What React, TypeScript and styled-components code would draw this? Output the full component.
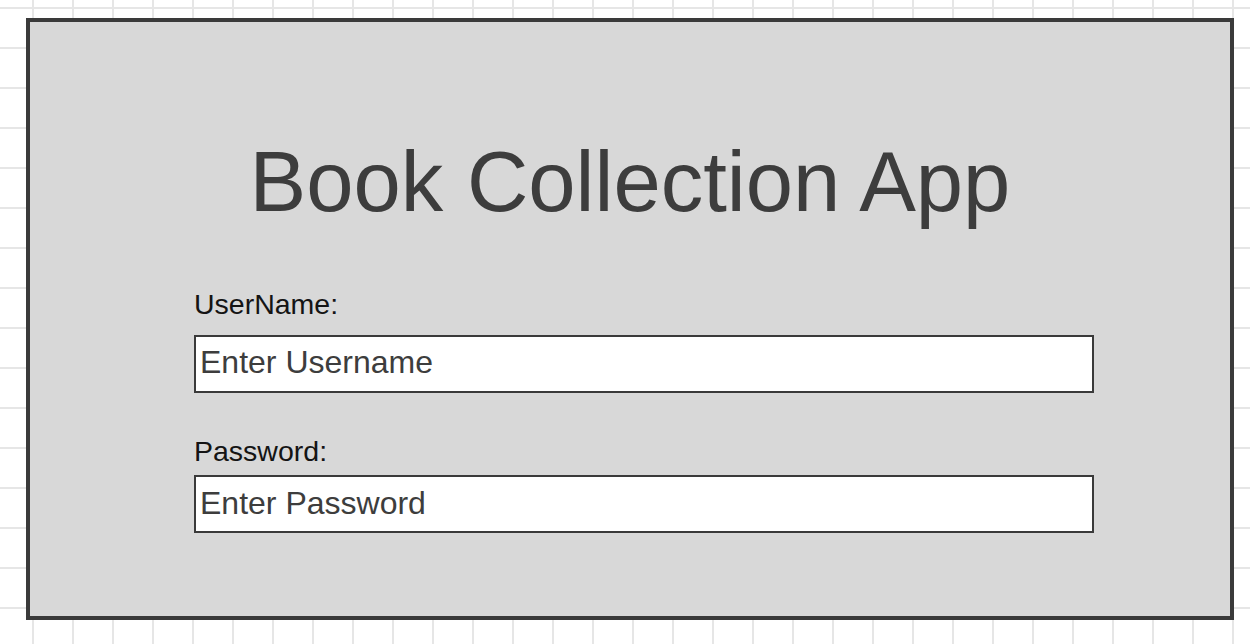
import React from "react";
import styled, { createGlobalStyle } from "styled-components";

const Global = createGlobalStyle`
  html, body { margin: 0; padding: 0; }
  body {
    width: 1250px;
    height: 644px;
    overflow: hidden;
    font-family: "Liberation Sans", Arial, sans-serif;
    background-color: #ffffff;
    background-image:
      linear-gradient(to right, #e6e6e6 0, #e6e6e6 2px, transparent 2px),
      linear-gradient(to bottom, #e6e6e6 0, #e6e6e6 2px, transparent 2px);
    background-size: 40px 40px;
    background-position: 32px 7px;
  }
`;

const Canvas = styled.div`
  padding: 18px 0 0 26px;
`;

const Panel = styled.main`
  box-sizing: border-box;
  width: 1208px;
  height: 602px;
  border: 4px solid #3a3a3a;
  background: #d8d8d8;
  display: flex;
  flex-direction: column;
`;

const Title = styled.h1`
  margin: 117px 0 0 0;
  font-size: 85px;
  font-weight: 400;
  line-height: 1;
  color: #3d3d3d;
  text-align: center;
`;

const Form = styled.form`
  margin: 66px 0 0 164px;
  width: 900px;
  display: flex;
  flex-direction: column;
`;

const Label = styled.label<{ $top: number; $gap: number }>`
  display: block;
  margin-top: ${(p) => p.$top}px;
  margin-bottom: ${(p) => p.$gap}px;
  font-size: 28.5px;
  line-height: 1;
  color: #141414;
`;

const Input = styled.input`
  box-sizing: border-box;
  width: 900px;
  height: 58px;
  margin: 0;
  border: 2px solid #3a3a3a;
  border-radius: 0;
  background: #ffffff;
  padding: 0 0 2px 4px;
  font-family: "Liberation Sans", Arial, sans-serif;
  font-size: 32px;
  color: #3d3d3d;
  outline: none;
  &::placeholder {
    color: #3d3d3d;
    opacity: 1;
  }
`;

export default function App() {
  return (
    <>
      <Global />
      <Canvas>
        <Panel>
          <Title>Book Collection App</Title>
          <Form onSubmit={(e) => e.preventDefault()}>
            <Label htmlFor="username" $top={0} $gap={16}>
              UserName:
            </Label>
            <Input id="username" type="text" placeholder="Enter Username" />
            <Label htmlFor="password" $top={44} $gap={10}>
              Password:
            </Label>
            <Input id="password" type="password" placeholder="Enter Password" />
          </Form>
        </Panel>
      </Canvas>
    </>
  );
}
